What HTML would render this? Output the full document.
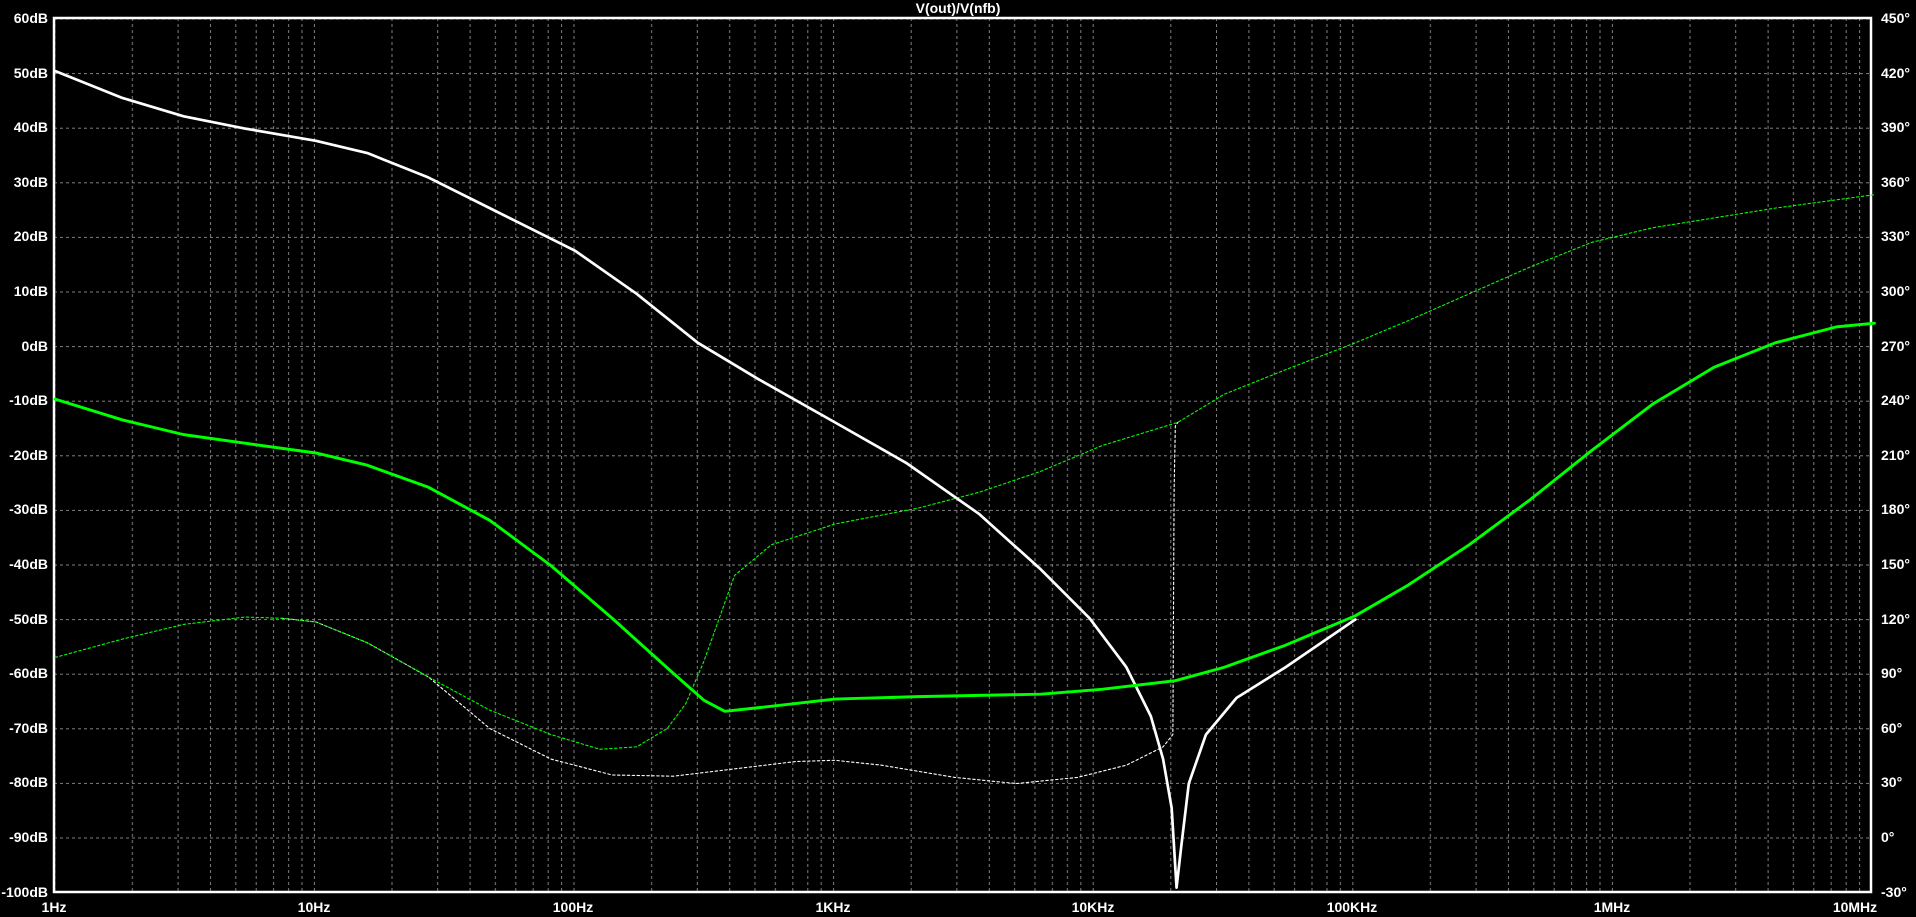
<!DOCTYPE html>
<html><head><meta charset="utf-8"><style>
html,body{margin:0;padding:0;background:#000;width:1916px;height:917px;overflow:hidden}
svg{display:block}
text{font-family:"Liberation Sans",sans-serif;font-weight:bold;font-size:14px;fill:#fff}
</style></head><body>
<svg width="1916" height="917" viewBox="0 0 1916 917" xmlns="http://www.w3.org/2000/svg">
<defs>
<pattern id="vg" x="54.3" y="0" width="259.6" height="917" patternUnits="userSpaceOnUse">
<g stroke="#808080" stroke-width="1" stroke-dasharray="3,3">
<line x1="0.5" y1="0" x2="0.5" y2="917"/>
<line x1="78.1" y1="0" x2="78.1" y2="917"/>
<line x1="123.8" y1="0" x2="123.8" y2="917"/>
<line x1="156.2" y1="0" x2="156.2" y2="917"/>
<line x1="181.5" y1="0" x2="181.5" y2="917"/>
<line x1="201.9" y1="0" x2="201.9" y2="917"/>
<line x1="219.3" y1="0" x2="219.3" y2="917"/>
<line x1="234.3" y1="0" x2="234.3" y2="917"/>
<line x1="247.7" y1="0" x2="247.7" y2="917"/>
</g></pattern>
<pattern id="hg" x="0" y="18.5" width="1916" height="54.6" patternUnits="userSpaceOnUse">
<line x1="0" y1="0.5" x2="1916" y2="0.5" stroke="#808080" stroke-width="1" stroke-dasharray="3,3"/>
</pattern>
</defs>
<rect x="54" y="18" width="1817" height="874" fill="url(#vg)"/>
<rect x="54" y="18" width="1817" height="874" fill="url(#hg)"/>
<rect x="54" y="18" width="1817" height="874" fill="none" stroke="#fff" stroke-width="2.5"/>
<text x="958" y="13" text-anchor="middle" font-size="13">V(out)/V(nfb)</text>
<g text-anchor="end">
<text x="48" y="23">60dB</text><text x="48" y="78">50dB</text><text x="48" y="132">40dB</text><text x="48" y="187">30dB</text><text x="48" y="241">20dB</text><text x="48" y="296">10dB</text><text x="48" y="351">0dB</text><text x="48" y="405">-10dB</text><text x="48" y="460">-20dB</text><text x="48" y="514">-30dB</text><text x="48" y="569">-40dB</text><text x="48" y="624">-50dB</text><text x="48" y="678">-60dB</text><text x="48" y="733">-70dB</text><text x="48" y="787">-80dB</text><text x="48" y="842">-90dB</text><text x="48" y="897">-100dB</text>
</g>
<g>
<text x="1881" y="23">450°</text><text x="1881" y="78">420°</text><text x="1881" y="132">390°</text><text x="1881" y="187">360°</text><text x="1881" y="241">330°</text><text x="1881" y="296">300°</text><text x="1881" y="351">270°</text><text x="1881" y="405">240°</text><text x="1881" y="460">210°</text><text x="1881" y="514">180°</text><text x="1881" y="569">150°</text><text x="1881" y="624">120°</text><text x="1881" y="678">90°</text><text x="1881" y="733">60°</text><text x="1881" y="787">30°</text><text x="1881" y="842">0°</text><text x="1881" y="897">-30°</text>
</g>
<g text-anchor="middle">
<text x="54" y="912">1Hz</text><text x="314" y="912">10Hz</text><text x="573" y="912">100Hz</text><text x="833" y="912">1KHz</text><text x="1093" y="912">10KHz</text><text x="1352" y="912">100KHz</text><text x="1612" y="912">1MHz</text><text x="1855" y="912">10MHz</text>
</g>
<g transform="scale(1.2243)" fill="none" stroke-linejoin="round" stroke-linecap="round">
<path d="M230,505 L258,508 L300,525 L350,553 L400,595 L450,620 L500,633 L550,634 L600,628 L650,622 L682,621 L720,625 L780,635 L830,640 L880,635 L920,625 L950,610 L958,600 L959,400 L960,348 L962,345" stroke="#fff" stroke-width="0.9" stroke-dasharray="2,2"/>
<path d="M45,537 L100,522 L150,510 L200,504 L230,505 L258,508 L300,525 L350,553 L400,580 L450,600 L490,612 L520,610 L545,595 L560,575 L575,540 L600,470 L630,445 L682,428 L750,415 L800,402 L850,385 L900,364 L962,345 L1000,322 L1050,302 L1107,280 L1150,262 L1200,240 L1250,218 L1300,198 L1350,186 L1400,178 L1450,170 L1531,159" stroke="#00ff00" stroke-width="0.9" stroke-dasharray="2,2"/>
<path d="M45,58 L100,80 L150,95 L200,105 L258,115 L300,125 L350,145 L400,170 L470,205 L520,240 L570,280 L620,310 L682,345 L740,378 L800,420 L850,465 L890,505 L920,545 L940,585 L950,620 L957,660 L961,725 L965,690 L971,640 L985,600 L1010,570 L1050,545 L1107,506" stroke="#fff" stroke-width="2.2"/>
<path d="M45,326 L100,343 L150,355 L200,362 L258,370 L300,380 L350,398 L400,425 L450,462 L500,505 L550,550 L575,572 L592,581 L620,578 L682,571 L750,569 L850,567 L900,563 L960,556 L1000,545 L1050,527 L1107,503 L1150,478 L1200,445 L1250,408 L1300,368 L1350,330 L1400,300 L1450,280 L1500,267 L1531,264" stroke="#00ff00" stroke-width="2.4"/>
</g>
</svg>
</body></html>
